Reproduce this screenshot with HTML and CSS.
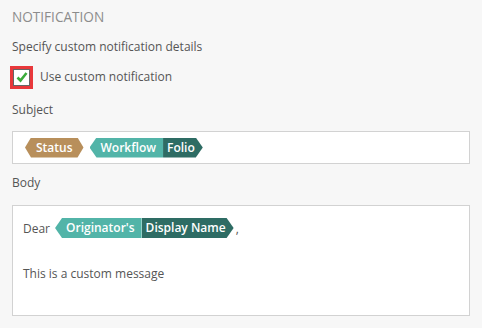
FILE: index.html
```html
<!DOCTYPE html>
<html>
<head>
<meta charset="utf-8">
<link rel="stylesheet" href="styles.css">
</head>
<body>
<div class="panel">
  <h2 class="title">NOTIFICATION</h2>
  <p class="hint">Specify custom notification details</p>
  <label class="check">
    <span class="box">
      <svg width="12" height="12" viewBox="0 0 12 12"><path d="M1.5 6.5 L4.5 9.5 L10.5 2" fill="none" stroke="#3bab3b" stroke-width="2.6" stroke-linejoin="miter"/></svg>
    </span>
    <span>Use custom notification</span>
  </label>
  <div class="label">Subject</div>
  <div class="field subject">
    <span class="tag both tan">Status</span>
    <span class="group"><span class="tag left teal">Workflow</span><span class="tag right dark">Folio</span></span>
  </div>
  <div class="label body-label">Body</div>
  <div class="field body">
    <div class="line"><span class="word">Dear</span><span class="group"><span class="tag left teal">Originator's</span><span class="tag right dark">Display Name</span></span><span class="comma">,</span></div>
    <div class="line msg">This is a custom message</div>
  </div>
</div>
</body>
</html>
```
FILE: styles.css
```css
html, body {
  margin: 0;
  padding: 0;
  background: #f7f7f7;
}
body {
  font-family: "Open Sans", "Liberation Sans", sans-serif;
  font-size: 12px;
  color: #555;
}
.panel {
  display: flex;
  flex-direction: column;
  padding: 8px 12px 0 12px;
  width: 458px;
}
.title {
  margin: 0;
  font-size: 13.6px;
  font-weight: 400;
  color: #8c8c8c;
  line-height: 18px;
}
.hint {
  margin: 12px 0 0 0;
  line-height: 18px;
}
.check {
  display: flex;
  align-items: center;
  gap: 10px;
  margin-top: 12px;
  line-height: 18px;
}
.box {
  width: 15px;
  height: 15px;
  border: 1px solid #666;
  outline: 3px solid #e8383b;
  margin-left: 1px;
  background: #fff;
  display: flex;
  align-items: center;
  justify-content: center;
}
.label {
  margin-top: 15px;
  line-height: 18px;
}
.body-label {
  margin-top: 10px;
}
.field {
  background: #fff;
  border: 1px solid #d2d2d2;
}
.subject {
  margin-top: 12px;
  height: 31px;
  padding: 0 12px;
  display: flex;
  align-items: center;
  gap: 6px;
}
.body {
  margin-top: 13px;
  height: 111px;
  padding: 12px 10px;
  box-sizing: border-box;
}
.line {
  display: flex;
  align-items: center;
  height: 20px;
}
.word {
  margin-right: 5px;
}
.comma {
  margin-left: 2px;
}
.msg {
  margin-top: 25px;
}
.group {
  display: inline-flex;
}
.tag {
  display: inline-block;
  color: #fff;
  height: 20px;
  line-height: 20px;
  font-weight: 600;
  font-size: 12px;
}
.tan { background: #b88f5b; }
.teal { background: #52b4a8; }
.dark { background: #2e6c64; }
.both {
  padding: 0 11px;
  clip-path: polygon(0 50%, 6px 0, calc(100% - 6px) 0, 100% 50%, calc(100% - 6px) 100%, 6px 100%);
}
.left {
  padding: 0 7px 0 11px;
  clip-path: polygon(0 50%, 7px 0, 100% 0, 100% 100%, 7px 100%);
}
.right {
  padding: 0 8px 0 4px;
  clip-path: polygon(0 0, calc(100% - 7px) 0, 100% 50%, calc(100% - 7px) 100%, 0 100%);
}
```
